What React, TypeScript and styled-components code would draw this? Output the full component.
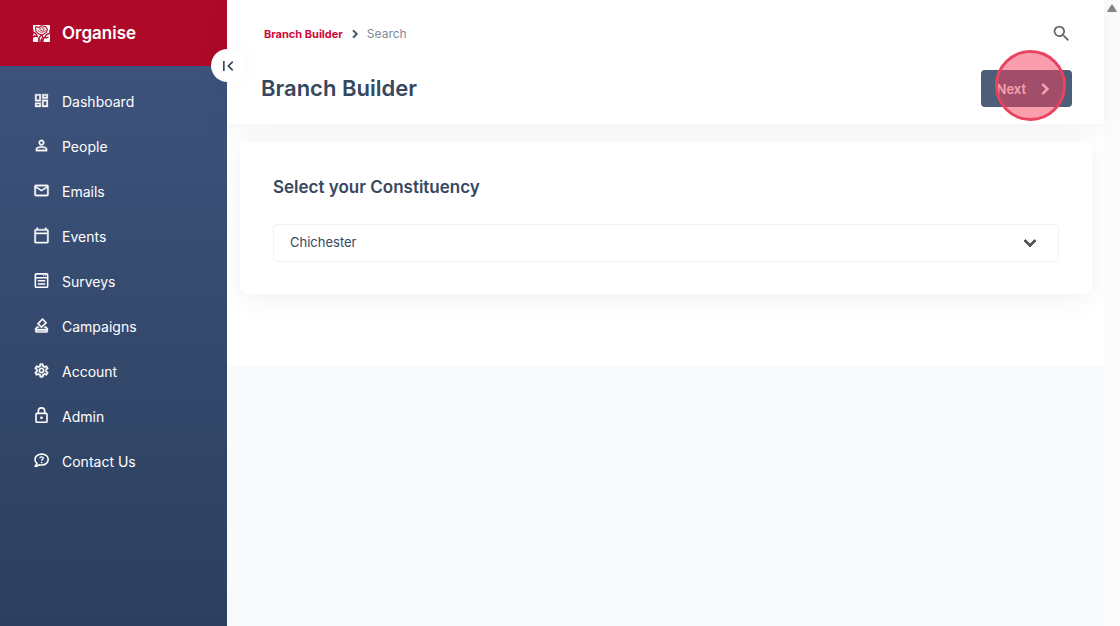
import React from "react";
import styled, { createGlobalStyle } from "styled-components";
import {
  MdOutlineDashboard,
  MdPersonOutline,
  MdMailOutline,
  MdOutlineCalendarToday,
  MdOutlineHowToVote,
  MdOutlineSettings,
  MdFirstPage,
  MdChevronRight,
  MdSearch,
  MdKeyboardArrowDown,
} from "react-icons/md";

const GlobalStyle = createGlobalStyle`
  *, *::before, *::after { box-sizing: border-box; }
  body {
    margin: 0;
    background: #f9fafc;
    color: #37475f;
    font-family: Inter, "Liberation Sans", sans-serif;
    font-size: 14px;
  }
  h1, h2, ul, ol { margin: 0; padding: 0; }
  ul, ol { list-style: none; }
  a { text-decoration: none; }
  button, select { font: inherit; }
  svg > path[fill="none"] { stroke: none; }
`;

const Shell = styled.div`
  display: grid;
  grid-template-columns: 227px minmax(0, 1fr) 16px;
  min-height: 100vh;
`;

const Sidebar = styled.aside`
  position: relative;
  background: linear-gradient(#3f557e, #2c3f5f);
  color: #fff;
`;

const Brand = styled.a`
  display: flex;
  align-items: center;
  gap: 12px;
  height: 66px;
  padding-left: 33px;
  background: #ae0929;
  color: #fff;
  font-size: 17px;
  font-weight: 600;
`;

const CollapseButton = styled.button`
  position: absolute;
  top: 49px;
  right: -17px;
  z-index: 2;
  display: grid;
  place-items: center;
  width: 33px;
  height: 33px;
  padding: 0;
  border: 0;
  border-radius: 50%;
  background: #fff;
  color: #37475f;
  box-shadow: 0 0 24px rgba(55, 71, 95, 0.04);
`;

const NavList = styled.ul`
  padding-top: 13px;
`;

const NavLink = styled.a`
  display: flex;
  align-items: center;
  gap: 12px;
  height: 45px;
  padding-left: 33px;
  color: #fff;
  line-height: 20px;

  svg {
    flex: none;
    margin-bottom: 2px;
  }
`;

const Main = styled.main`
  display: flex;
  flex-direction: column;
  min-width: 0;
`;

const TopBar = styled.header`
  z-index: 1;
  padding: 23px 32px 17px 34px;
  background: #fff;
  box-shadow: 0 4px 20px rgba(55, 71, 95, 0.07);
`;

const BarRow = styled.div`
  display: flex;
  align-items: center;
  justify-content: space-between;
`;

const Crumbs = styled.ol`
  display: flex;
  align-items: center;
  padding-left: 3px;
  font-size: 12px;
  line-height: 18px;

  li {
    display: flex;
    align-items: center;
  }
  svg {
    margin: 0 4px;
    stroke: currentColor;
    stroke-width: 1;
  }
`;

const CrumbLink = styled.a`
  color: #d0083a;
  font-size: 11px;
  font-weight: 700;
`;

const CrumbHere = styled.span`
  color: #7f8997;
`;

const SearchButton = styled.button`
  display: flex;
  padding: 0;
  border: 0;
  background: none;
  color: #666;
`;

const TitleRow = styled(BarRow)`
  padding-top: 26px;
`;

const Title = styled.h1`
  padding-bottom: 2px;
  font-size: 22px;
  line-height: 34px;
  font-weight: 600;
`;

const NextButton = styled.button`
  position: relative;
  display: flex;
  align-items: center;
  gap: 8px;
  height: 37px;
  padding: 0 16px;
  border: 0;
  border-radius: 4px;
  background: #4c5e79;
  color: #fff;
  font-size: 13px;
  font-weight: 600;

  svg {
    stroke: currentColor;
    stroke-width: 1;
  }
`;

const ClickMarker = styled.span`
  position: absolute;
  top: -20px;
  right: 6px;
  width: 71px;
  height: 71px;
  border: 3px solid #e8435f;
  border-radius: 50%;
  background: rgba(245, 62, 91, 0.5);
`;

const Content = styled.div`
  padding: 18px 12px 72px 13px;
  background: #fff;
`;

const Card = styled.section`
  padding: 32px 33px;
  border-radius: 8px;
  background: #fff;
  box-shadow: 0 4px 24px rgba(55, 71, 95, 0.08);
`;

const CardTitle = styled.h2`
  padding-bottom: 24px;
  font-size: 17px;
  line-height: 26px;
  font-weight: 600;
`;

const SelectField = styled.div`
  display: grid;
  align-items: center;

  > * {
    grid-area: 1 / 1;
  }
  svg {
    justify-self: end;
    margin-right: 17px;
    color: #555;
    stroke: currentColor;
    stroke-width: 1;
    pointer-events: none;
  }
`;

const Select = styled.select`
  appearance: none;
  width: 100%;
  height: 38px;
  padding: 0 16px 2px;
  border: 1px solid #f1f2f4;
  border-radius: 4px;
  background: #fff;
  color: #37475f;
  font-size: 13px;
`;

const ScrollTrack = styled.div`
  display: flex;
  justify-content: center;
  padding-top: 4px;
  background: #fcfcfc;
`;

const RoseLogo = () => (
  <svg width="17" height="17" viewBox="0 0 17 17" aria-hidden="true">
    <rect width="17" height="17" rx="1" fill="#fff" />
    <g fill="none" stroke="#ae0929" strokeLinecap="round">
      <path d="M3 1.5C1.8 3.2 3.4 4 2.8 5.6C3 7.4 4.6 7.2 5 8.6L9 10.2L13.4 7.4L14.4 4.4L12.4 1.4L8 .8L5.6 2.6Z" strokeWidth="1.1" />
      <path d="M6 4.2Q8 1.8 10.8 3Q12 5.4 9.4 6Q7 6.2 7.8 4.4M5 5.6Q8.4 9.4 13 5.4" strokeWidth=".8" />
      <path d="M8.6 10L6.4 12.4L5.4 16M9 10.2L10.4 13L10 16.4M.6 7.4Q3 8 4.4 11.6L1 11M16.4 8.4Q12.6 9.4 11.4 13L15 12.4" strokeWidth="1.2" />
      <path d="M6 14V17M9 13V17M8 15V17M0 5V9M17 8V5M0 12L2 11" strokeWidth="1.4" />
    </g>
  </svg>
);

const SurveyIcon = () => (
  <svg width="17" height="17" viewBox="0 0 16 16" fill="none" stroke="currentColor" aria-hidden="true">
    <rect x="2.2" y="1.8" width="11.6" height="12.6" rx="1" strokeWidth="1.5" />
    <path d="M2 5.3H14M4.5 8.3H11.5M4.5 11.3H11.5" strokeWidth="1.4" />
    <path d="M9.4 3.6H10.4M11.4 3.6H12.4" strokeWidth="1" />
  </svg>
);

const LockIcon = () => (
  <svg width="17" height="17" viewBox="0 0 16 16" fill="none" stroke="currentColor" strokeWidth="1.5" aria-hidden="true">
    <rect x="2.8" y="6" width="10.4" height="8.4" rx="1" />
    <path d="M5 6V3.8a3 3 0 0 1 6 0V6" />
    <circle cx="8" cy="10.2" r="1.3" fill="currentColor" stroke="none" />
  </svg>
);

const HelpBubbleIcon = () => (
  <svg width="17" height="17" viewBox="0 0 16 16" fill="none" stroke="currentColor" strokeLinejoin="round" aria-hidden="true">
    <path d="M8.2 2C4.6 2 1.9 4.2 1.9 7c0 1.6.7 2.9 1.9 3.8L2 13.6c1.5 0 2.8-.5 3.8-1.6.8.2 1.5.3 2.4.3 3.6 0 6.1-2.4 6.1-5.3S11.8 2 8.2 2Z" strokeWidth="1.5" />
    <path d="M6.4 5.9C6.6 4.1 9.8 4.3 9.6 6C9.5 7 8.1 7 8.1 8.3" strokeWidth="1.3" />
    <circle cx="8.1" cy="9.9" r=".8" fill="currentColor" stroke="none" />
  </svg>
);

const bold = { size: 17, stroke: "currentColor", strokeWidth: 0.5 };

const NAV = [
  { label: "Dashboard", icon: <MdOutlineDashboard {...bold} /> },
  { label: "People", icon: <MdPersonOutline {...bold} /> },
  { label: "Emails", icon: <MdMailOutline {...bold} /> },
  { label: "Events", icon: <MdOutlineCalendarToday {...bold} /> },
  { label: "Surveys", icon: <SurveyIcon /> },
  { label: "Campaigns", icon: <MdOutlineHowToVote {...bold} /> },
  { label: "Account", icon: <MdOutlineSettings {...bold} /> },
  { label: "Admin", icon: <LockIcon /> },
  { label: "Contact Us", icon: <HelpBubbleIcon /> },
];

export default function App() {
  return (
    <>
      <GlobalStyle />
      <Shell>
        <Sidebar>
          <Brand href="#">
            <RoseLogo />
            Organise
          </Brand>
          <CollapseButton type="button" aria-label="Collapse menu">
            <MdFirstPage size={20} />
          </CollapseButton>
          <nav aria-label="Main">
            <NavList>
              {NAV.map(({ label, icon }) => (
                <li key={label}>
                  <NavLink href="#">
                    {icon}
                    {label}
                  </NavLink>
                </li>
              ))}
            </NavList>
          </nav>
        </Sidebar>
        <Main>
          <TopBar>
            <BarRow>
              <Crumbs aria-label="Breadcrumb">
                <li>
                  <CrumbLink href="#">Branch Builder</CrumbLink>
                </li>
                <li>
                  <MdChevronRight size={16} aria-hidden="true" />
                  <CrumbHere>Search</CrumbHere>
                </li>
              </Crumbs>
              <SearchButton type="button" aria-label="Search">
                <MdSearch size={21} />
              </SearchButton>
            </BarRow>
            <TitleRow>
              <Title>Branch Builder</Title>
              <NextButton type="button">
                Next
                <MdChevronRight size={22} aria-hidden="true" />
                <ClickMarker />
              </NextButton>
            </TitleRow>
          </TopBar>
          <Content>
            <Card>
              <CardTitle id="constituency-title">Select your Constituency</CardTitle>
              <SelectField>
                <Select aria-labelledby="constituency-title" defaultValue="Chichester">
                  <option>Chichester</option>
                </Select>
                <MdKeyboardArrowDown size={24} aria-hidden="true" />
              </SelectField>
            </Card>
          </Content>
        </Main>
        <ScrollTrack aria-hidden="true">
          <svg width="10" height="9" viewBox="0 0 10 9">
            <path d="M4.2 1Q5 .2 5.8 1L9.6 7Q9.8 8 9 8H1Q.2 8 .4 7Z" fill="#868686" />
          </svg>
        </ScrollTrack>
      </Shell>
    </>
  );
}
